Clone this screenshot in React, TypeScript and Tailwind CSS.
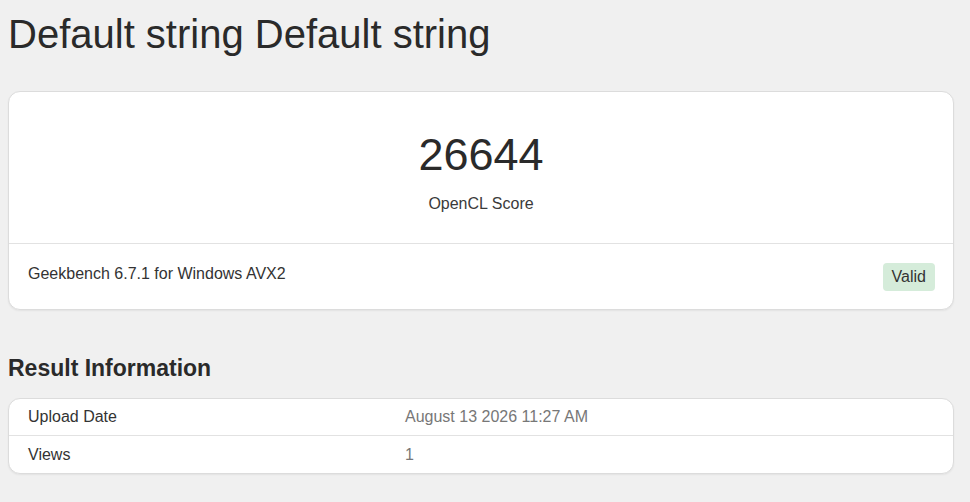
import React from 'react';

const rows = [
  { label: 'Upload Date', value: 'August 13 2026 11:27 AM' },
  { label: 'Views', value: '1' },
];

export default function App() {
  return (
    <div className="min-h-screen bg-[#f0f0f0] text-[#333] font-['Liberation_Sans',Arial,sans-serif]">
      <div className="pl-[8px] pr-[16px] pb-[28px]">
        {/* Title */}
        <h1 className="pt-[10px] text-[40px] leading-[48px] font-normal text-[#2a2a2a]">
          Default string Default string
        </h1>

        {/* Score card */}
        <div className="mt-[33px] bg-white border border-[#dcdcdc] rounded-[12px] shadow-[0_1px_2px_rgba(0,0,0,0.06)]">
          <div className="pt-[36px] pb-[27px] flex flex-col items-center border-b border-[#e2e2e2]">
            <div className="text-[45px] leading-[54px] text-[#2a2a2a]">26644</div>
            <div className="mt-[10px] text-[16px] leading-[24px] text-[#3a3a3a]">OpenCL Score</div>
          </div>
          <div className="pt-[18px] pb-[18px] pl-[19px] pr-[18px] flex items-start justify-between">
            <div className="text-[16px] leading-[24px] text-[#333]">Geekbench 6.7.1 for Windows AVX2</div>
            <span className="mt-[1px] px-[9px] py-[2px] rounded-[4px] bg-[#d5ecda] text-[16px] leading-[24px] text-[#333]">
              Valid
            </span>
          </div>
        </div>

        {/* Result information */}
        <h2 className="mt-[44px] text-[23px] leading-[28px] font-bold text-[#2a2a2a]">Result Information</h2>
        <div className="mt-[16px] bg-white border border-[#dcdcdc] rounded-[12px] shadow-[0_1px_2px_rgba(0,0,0,0.06)]">
          {rows.map((r, i) => (
            <div
              key={r.label}
              className={
                'grid grid-cols-[377px_1fr] h-[37px] items-center px-[19px] text-[16px] leading-[24px] ' +
                (i < rows.length - 1 ? 'border-b border-[#e2e2e2]' : '')
              }
            >
              <div className="text-[#333]">{r.label}</div>
              <div className="text-[#777]">{r.value}</div>
            </div>
          ))}
        </div>
      </div>
    </div>
  );
}
